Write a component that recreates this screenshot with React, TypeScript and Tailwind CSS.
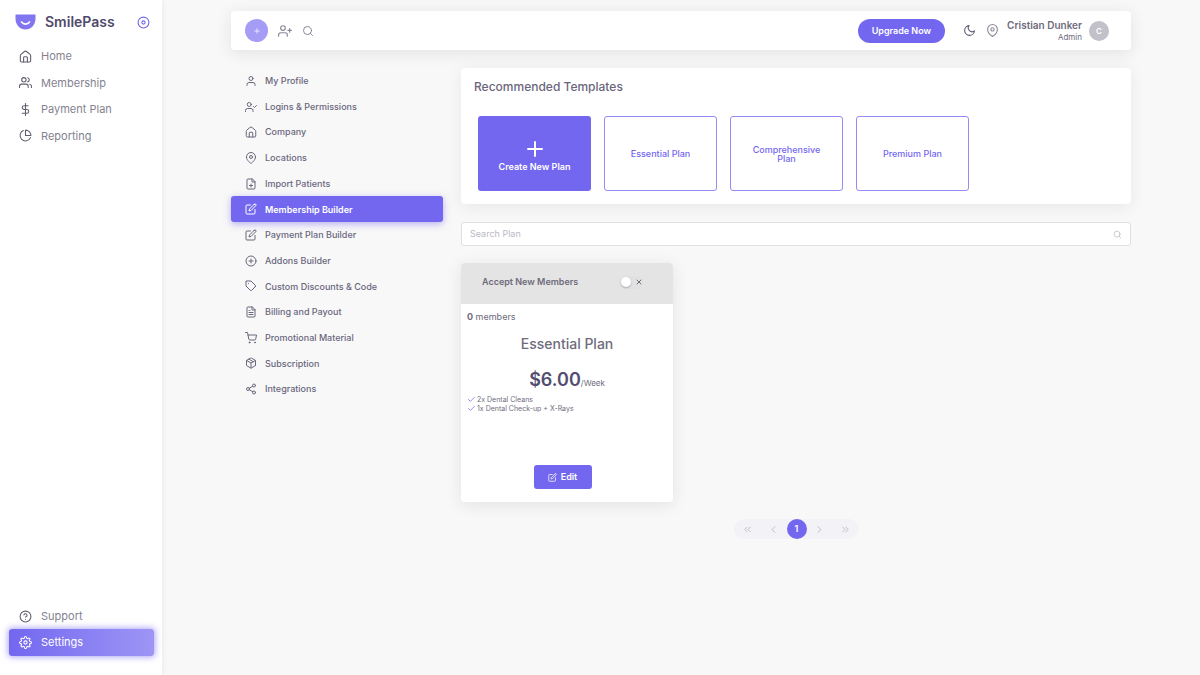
import type { ReactNode } from "react";
import {
  FiCheck,
  FiChevronLeft,
  FiChevronRight,
  FiChevronsLeft,
  FiChevronsRight,
  FiDisc,
  FiDollarSign,
  FiEdit,
  FiFilePlus,
  FiFileText,
  FiHelpCircle,
  FiMapPin,
  FiMoon,
  FiPackage,
  FiPieChart,
  FiPlus,
  FiPlusCircle,
  FiSearch,
  FiSettings,
  FiShare2,
  FiShoppingCart,
  FiTag,
  FiUser,
  FiUserCheck,
  FiUserPlus,
  FiUsers,
  FiX,
} from "react-icons/fi";

type Item = { label: string; icon: ReactNode };

function HomeIcon({ size }: { size: number }) {
  return (
    <svg
      width={size}
      height={size}
      viewBox="0 0 24 24"
      fill="none"
      stroke="currentColor"
      strokeWidth="2"
      strokeLinecap="round"
      strokeLinejoin="round"
      aria-hidden="true"
    >
      <path d="M2.5 10.5a3 3 0 0 1 1.1-2.3l6.5-5.4a3 3 0 0 1 3.8 0l6.5 5.4a3 3 0 0 1 1.1 2.3V20a2 2 0 0 1-2 2h-15a2 2 0 0 1-2-2z" />
      <path d="M8.500 22v-8a1.500 1.500 0 0 1 1.500-1.500h4a1.500 1.500 0 0 1 1.500 1.500V22" />
    </svg>
  );
}

function Logo() {
  return (
    <svg width="21" height="16" viewBox="0 0 21 16" aria-hidden="true">
      <path d="M0.500 0.500H20.500V4.500C20.500 11 16 15.500 10.500 15.500S0.500 11 0.500 4.500Z" fill="#8176f0" />
      <path d="M6.500 8C8.500 10.800 12.500 10.800 14.500 8" fill="none" stroke="#fff" strokeWidth="1.600" strokeLinecap="round" />
    </svg>
  );
}

const mainItems: Item[] = [
  { label: "Home", icon: <HomeIcon size={13} /> },
  { label: "Membership", icon: <FiUsers size={13} /> },
  { label: "Payment Plan", icon: <FiDollarSign size={13} /> },
  { label: "Reporting", icon: <FiPieChart size={13} /> },
];

const settingsItems: Item[] = [
  { label: "My Profile", icon: <FiUser size={12} /> },
  { label: "Logins & Permissions", icon: <FiUserCheck size={12} /> },
  { label: "Company", icon: <HomeIcon size={12} /> },
  { label: "Locations", icon: <FiMapPin size={12} /> },
  { label: "Import Patients", icon: <FiFilePlus size={12} /> },
  { label: "Membership Builder", icon: <FiEdit size={12} /> },
  { label: "Payment Plan Builder", icon: <FiEdit size={12} /> },
  { label: "Addons Builder", icon: <FiPlusCircle size={12} /> },
  { label: "Custom Discounts & Code", icon: <FiTag size={12} /> },
  { label: "Billing and Payout", icon: <FiFileText size={12} /> },
  { label: "Promotional Material", icon: <FiShoppingCart size={12} /> },
  { label: "Subscription", icon: <FiPackage size={12} /> },
  { label: "Integrations", icon: <FiShare2 size={12} /> },
];

const templates = ["Essential Plan", "Comprehensive Plan", "Premium Plan"];
const features = ["2x Dental Cleans", "1x Dental Check-up + X-Rays"];

function Sidebar() {
  return (
    <aside className="flex w-[162px] shrink-0 flex-col bg-white shadow-[0_0_6px_rgba(34,41,47,0.08)]">
      <div className="flex items-center pt-3 pr-3 pl-[15px]">
        <Logo />
        <span className="ml-[9px] text-[14px] leading-5 font-semibold text-[#4f4a6b]">SmilePass</span>
        <button type="button" aria-label="Collapse menu" className="ml-auto text-[#7367f0]">
          <FiDisc size={13} />
        </button>
      </div>
      <nav className="mt-[11px] grid h-[106px] auto-rows-fr">
        {mainItems.map((item) => (
          <a key={item.label} href="#" className="flex items-center gap-[9px] pl-[19px] text-[11px] text-[#85828f]">
            <span className="text-[#625f6e]">{item.icon}</span>
            {item.label}
          </a>
        ))}
      </nav>
      <nav className="mt-auto pr-2 pb-[19px] pl-[9px]">
        <a href="#" className="flex h-[26px] items-center gap-[9px] pl-[10px] text-[11px] text-[#85828f]">
          <FiHelpCircle size={13} className="text-[#625f6e]" />
          Support
        </a>
        <a
          href="#"
          className="flex h-[27px] items-center gap-[9px] rounded-[3px] bg-linear-to-r from-[#7367f0] to-[#9e95f5] pl-[10px] text-[11px] text-white shadow-[0_0_6px_1px_rgba(115,103,240,0.6)]"
        >
          <FiSettings size={13} />
          Settings
        </a>
      </nav>
    </aside>
  );
}

function Header() {
  return (
    <header className="flex h-[39px] items-center rounded bg-white pr-[22px] pl-[14px] shadow-[0_3px_16px_rgba(34,41,47,0.1)]">
      <button
        type="button"
        aria-label="Add"
        className="flex size-[23px] items-center justify-center rounded-full bg-[#a59cf6] text-white"
      >
        <FiPlus size={8} />
      </button>
      <button type="button" aria-label="Add member" className="ml-[10px] text-[#8b8898]">
        <FiUserPlus size={14} />
      </button>
      <button type="button" aria-label="Search" className="ml-[10px] text-[#8b8898]">
        <FiSearch size={12} />
      </button>
      <button
        type="button"
        className="ml-auto h-6 rounded-full bg-[#7367f0] px-[14px] text-[9px] font-semibold text-white"
      >
        Upgrade Now
      </button>
      <button type="button" aria-label="Dark mode" className="ml-[18px] text-[#5e5873]">
        <FiMoon size={13} />
      </button>
      <button type="button" aria-label="Location" className="ml-[10px] text-[#8b8898]">
        <FiMapPin size={13} />
      </button>
      <div className="ml-2 text-right text-[#6e6b7b]">
        <p className="text-[10px] leading-3 font-semibold">Cristian Dunker</p>
        <p className="text-[8px] leading-3">Admin</p>
      </div>
      <span className="ml-[7px] flex size-5 items-center justify-center rounded-full bg-[#c2c0c8] text-[8px] font-semibold text-white">
        C
      </span>
    </header>
  );
}

function SettingsNav() {
  return (
    <nav className="grid h-[334px] w-[212px] shrink-0 auto-rows-fr">
      {settingsItems.map((item) => {
        const active = item.label === "Membership Builder";
        return (
          <a
            key={item.label}
            href="#"
            className={
              active
                ? "flex items-center gap-2 rounded-[3px] bg-[#7367f0] pl-[14px] text-[9px] font-semibold text-white shadow-[0_2px_7px_rgba(115,103,240,0.5)]"
                : "flex items-center gap-2 pl-[14px] text-[9px] font-medium text-[#6a677d]"
            }
          >
            {item.icon}
            {item.label}
          </a>
        );
      })}
    </nav>
  );
}

function Templates() {
  return (
    <section className="rounded bg-white px-[13px] pt-[11px] pb-[13px] shadow-[0_3px_16px_rgba(34,41,47,0.08)]">
      <h2 className="text-[12px] leading-4 font-medium text-[#6a667c]">Recommended Templates</h2>
      <div className="mt-[21px] flex gap-[13px] pl-1">
        <button
          type="button"
          className="flex h-[75px] w-[113px] flex-col items-center justify-center rounded-[3px] bg-[#7367f0] pt-[2px] text-[9px] leading-3 font-semibold text-white"
        >
          <FiPlus size={24} />
          Create New Plan
        </button>
        {templates.map((name) => (
          <button
            key={name}
            type="button"
            className="h-[75px] w-[113px] rounded-[3px] border border-[#958cf4] px-4 text-[9px] leading-[9px] font-medium text-[#7367f0]"
          >
            {name}
          </button>
        ))}
      </div>
    </section>
  );
}

function PlanCard() {
  return (
    <article className="mt-[17px] w-[212px] overflow-hidden rounded bg-white text-[#6e6b7b] shadow-[0_3px_16px_rgba(34,41,47,0.1)]">
      <label className="flex h-[41px] items-center bg-[#e4e4e4] pr-[30px] pb-[3px] pl-[21px]">
        <span className="text-[9px] font-semibold">Accept New Members</span>
        <span className="ml-auto flex h-[13px] w-[22px] items-center justify-between rounded-full bg-[#e1e1e2]">
          <input
            type="checkbox"
            className="size-[10px] appearance-none rounded-full bg-white shadow-[0_1px_2px_rgba(34,41,47,0.3)]"
          />
          <FiX size={8} strokeWidth={3} />
        </span>
      </label>
      <div className="px-[6px] pb-[13px]">
        <p className="pt-[7px] text-[9px] leading-3">
          <b className="font-bold">0</b> members
        </p>
        <h3 className="mt-[11px] text-center text-[14px] leading-5 font-medium">Essential Plan</h3>
        <p className="mt-[14px] text-center text-[18px] leading-6 font-semibold text-[#534d70]">
          $6.00<span className="text-[8px] font-normal text-[#6e6b7b]">/Week</span>
        </p>
        <ul className="h-[70px] text-[7px] leading-[9px]">
          {features.map((feature) => (
            <li key={feature} className="flex items-center gap-px">
              <FiCheck size={9} className="text-[#7367f0]" />
              {feature}
            </li>
          ))}
        </ul>
        <div className="flex justify-center pr-[9px]">
          <button
            type="button"
            className="flex h-6 w-[58px] items-center justify-center gap-1 rounded-[3px] bg-[#7367f0] text-[9px] font-semibold text-white"
          >
            <FiEdit size={9} />
            Edit
          </button>
        </div>
      </div>
    </article>
  );
}

function Pagination() {
  return (
    <nav
      aria-label="Pages"
      className="mx-auto mt-[17px] grid h-5 w-[125px] grid-cols-[27px_26px_20px_25px_27px] items-center justify-items-center rounded-full bg-[#f3f2f7] text-[#b9b9c3]"
    >
      <button type="button" aria-label="First page"><FiChevronsLeft size={11} /></button>
      <button type="button" aria-label="Previous page"><FiChevronLeft size={11} /></button>
      <button type="button" className="size-5 rounded-full bg-[#7367f0] text-[9px] font-semibold text-white">1</button>
      <button type="button" aria-label="Next page"><FiChevronRight size={11} /></button>
      <button type="button" aria-label="Last page"><FiChevronsRight size={11} /></button>
    </nav>
  );
}

export default function App() {
  return (
    <div className="flex min-h-screen bg-[#f8f8f8] font-[Inter,sans-serif]">
      <Sidebar />
      <main className="flex-1 pt-[11px]">
        <div className="mx-auto max-w-[900px]">
          <Header />
          <div className="mt-[18px] flex gap-[18px]">
            <SettingsNav />
            <div className="min-w-0 flex-1">
              <Templates />
              <div className="mt-[18px] flex h-6 items-center rounded-[3px] border border-[#e0dfe5] bg-white px-2 text-[#b9b9c3]">
                <input
                  type="search"
                  aria-label="Search Plan"
                  placeholder="Search Plan"
                  className="w-full bg-transparent text-[9px] outline-none placeholder:text-[#b9b9c3]"
                />
                <FiSearch size={9} />
              </div>
              <PlanCard />
              <Pagination />
            </div>
          </div>
        </div>
      </main>
    </div>
  );
}
